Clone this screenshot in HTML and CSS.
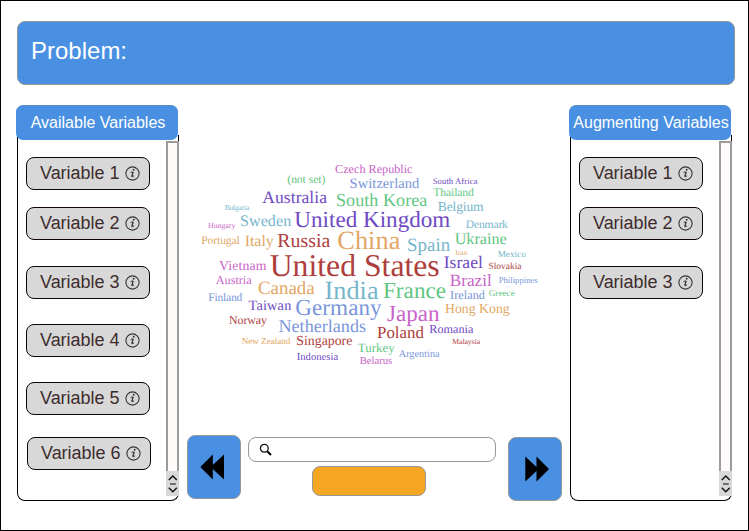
FILE: index.html
```html
<!DOCTYPE html>
<html lang="en">
<head>
<meta charset="utf-8">
<title>Variables</title>
<link rel="stylesheet" href="styles.css">
</head>
<body>
<svg class="defs" width="0" height="0" aria-hidden="true">
  <symbol id="info" viewBox="0 0 15 15">
    <circle cx="7.5" cy="7.5" r="6.6" fill="none" stroke="#3b3435" stroke-width="1.1"/>
    <circle cx="8.7" cy="3.7" r="0.95" fill="#3b3435"/>
    <path d="M5.6 6.6Q7.4 5.6 8.1 6L6.9 10.4Q6.7 11.6 9.1 9.8" fill="none" stroke="#3b3435" stroke-width="1"/>
    <path d="M8 6.2 6.9 10.6" stroke="#3b3435" stroke-width="1.2"/>
  </symbol>
  <symbol id="stepper" viewBox="0 0 13 25">
    <path d="M2.8 9 6.8 5 10.8 9M2.8 16.8 6.8 20.8 10.8 16.8" fill="none" stroke="#111" stroke-width="1.4"/>
    <path d="M4 13H9.8" stroke="#333" stroke-width="1.3"/>
  </symbol>
</svg>
<div class="frame">
  <header class="problem">Problem:</header>
  <main class="columns">
    <section class="panel">
      <h2 class="panel-title"><span class="available">Available Variables</span></h2>
      <div class="panel-body">
        <ul class="list">
          <li class="chip">Variable 1<svg><use href="#info"/></svg></li>
          <li class="chip">Variable 2<svg><use href="#info"/></svg></li>
          <li class="chip">Variable 3<svg><use href="#info"/></svg></li>
          <li class="chip">Variable 4<svg><use href="#info"/></svg></li>
          <li class="chip">Variable 5<svg><use href="#info"/></svg></li>
          <li class="chip">Variable 6<svg><use href="#info"/></svg></li>
        </ul>
        <div class="scroll"><div class="track"></div><svg class="stepper"><use href="#stepper"/></svg></div>
      </div>
    </section>
    <section class="center">
      <svg class="cloud" viewBox="187 105 375 330">
        <g class="magenta">
          <text x="335" y="172.5" font-size="12.2" textLength="77.5">Czech Republic</text>
          <text x="208" y="227.5" font-size="7.8" textLength="27.3">Hungary</text>
          <text x="219" y="270.3" font-size="13.8" textLength="47.5">Vietnam</text>
          <text x="215.7" y="284" font-size="12.2" textLength="36">Austria</text>
          <text x="449.7" y="286" font-size="17.2" textLength="42">Brazil</text>
          <text x="387" y="321" font-size="23.1" textLength="52.5">Japan</text>
          <text x="359.7" y="363.5" font-size="10.7" textLength="32.5">Belarus</text>
        </g>
        <g class="green">
          <text x="287.3" y="182.5" font-size="11.6" textLength="38">(not set)</text>
          <text x="433.3" y="196" font-size="11.6" textLength="40.5">Thailand</text>
          <text x="336" y="205.5" font-size="18.1" textLength="91.3">South Korea</text>
          <text x="454.7" y="244.3" font-size="16.1" textLength="52">Ukraine</text>
          <text x="383" y="298" font-size="23.1" textLength="63">France</text>
          <text x="488.7" y="296" font-size="9.1" textLength="26">Greece</text>
          <text x="357.7" y="352" font-size="12.8" textLength="37">Turkey</text>
        </g>
        <g class="blue">
          <text x="349.6" y="188.3" font-size="14.5" textLength="69.7">Switzerland</text>
          <text x="498.7" y="283" font-size="8.7" textLength="39">Philippines</text>
          <text x="208.3" y="301" font-size="11.5" textLength="34">Finland</text>
          <text x="295.3" y="315" font-size="23.1" textLength="86.3">Germany</text>
          <text x="450" y="299" font-size="12.3" textLength="35">Ireland</text>
          <text x="278.5" y="331.8" font-size="18.1" textLength="87.5">Netherlands</text>
          <text x="398.7" y="357" font-size="10.3" textLength="41">Argentina</text>
        </g>
        <g class="purple">
          <text x="432.7" y="184.3" font-size="8.7" textLength="44.8">South Africa</text>
          <text x="262.3" y="203.3" font-size="17.6" textLength="64.7">Australia</text>
          <text x="294.3" y="227" font-size="23.1" textLength="156">United Kingdom</text>
          <text x="443.7" y="268" font-size="17.6" textLength="39.2">Israel</text>
          <text x="248.5" y="309.5" font-size="14.3" textLength="42.8">Taiwan</text>
          <text x="429.3" y="333" font-size="12.2" textLength="44">Romania</text>
          <text x="296.7" y="359.5" font-size="10.6" textLength="41.5">Indonesia</text>
        </g>
        <g class="teal">
          <text x="437.7" y="210.7" font-size="13.6" textLength="46">Belgium</text>
          <text x="224.7" y="209.8" font-size="7.5" textLength="24.6">Bulgaria</text>
          <text x="240" y="226" font-size="16.1" textLength="51.2">Sweden</text>
          <text x="465.7" y="227.7" font-size="11.6" textLength="42.2">Denmark</text>
          <text x="407" y="251.3" font-size="18.9" textLength="43.3">Spain</text>
          <text x="497.7" y="256.5" font-size="9.1" textLength="28">Mexico</text>
          <text x="324.5" y="299" font-size="26.2" textLength="54">India</text>
        </g>
        <g class="orange">
          <text x="201.2" y="244.3" font-size="11.6" textLength="38.6">Portugal</text>
          <text x="244.7" y="245.7" font-size="15.8" textLength="29">Italy</text>
          <text x="337.3" y="249" font-size="26.3" textLength="63">China</text>
          <text x="455.3" y="254.7" font-size="7.3" textLength="12">Iran</text>
          <text x="258" y="294" font-size="18.9" textLength="56.7">Canada</text>
          <text x="445" y="313" font-size="13.8" textLength="64.7">Hong Kong</text>
          <text x="241.7" y="343.5" font-size="9.1" textLength="48.6">New Zealand</text>
        </g>
        <g class="red">
          <text x="277.3" y="247" font-size="19.8" textLength="53">Russia</text>
          <text x="269.7" y="276" font-size="31.7" textLength="170">United States</text>
          <text x="488.5" y="269" font-size="9.4" textLength="33">Slovakia</text>
          <text x="229" y="323.5" font-size="11.9" textLength="38">Norway</text>
          <text x="377" y="338" font-size="16.9" textLength="47">Poland</text>
          <text x="296.3" y="345" font-size="13.8" textLength="56">Singapore</text>
          <text x="452.3" y="344" font-size="7.6" textLength="27.7">Malaysia</text>
        </g>
      </svg>
      <div class="controls">
        <button class="nav" aria-label="Previous"><svg viewBox="0 0 54 64"><path d="M13.3 32 25.8 19.5V30L37 19.5V44.5L25.8 34V44.5Z"/></svg></button>
        <div class="fields">
          <label class="search"><svg viewBox="0 0 14 14"><circle cx="5.3" cy="5.3" r="3.9" fill="none" stroke="#111" stroke-width="1.3"/><path d="M8.2 8.2 12 12" stroke="#000" stroke-width="2.1"/></svg><input aria-label="Search"></label>
          <button class="submit" aria-label="Submit"></button>
        </div>
        <button class="nav next" aria-label="Next"><svg viewBox="0 0 54 64"><path d="M41 32 28.5 19.5V30L17.3 19.5V44.5L28.5 34V44.5Z"/></svg></button>
      </div>
    </section>
    <section class="panel">
      <h2 class="panel-title"><span class="augmenting">Augmenting Variables</span></h2>
      <div class="panel-body">
        <ul class="list">
          <li class="chip">Variable 1<svg><use href="#info"/></svg></li>
          <li class="chip">Variable 2<svg><use href="#info"/></svg></li>
          <li class="chip">Variable 3<svg><use href="#info"/></svg></li>
        </ul>
        <div class="scroll"><div class="track"></div><svg class="stepper"><use href="#stepper"/></svg></div>
      </div>
    </section>
  </main>
</div>
</body>
</html>
```
FILE: styles.css
```css
* { box-sizing: border-box; }
body { margin: 0; background: #fff; font-family: "Liberation Sans", Arial, sans-serif; }
.defs { display: block; }
.frame { width: 749px; height: 531px; border: 1px solid #000; padding: 20px 13px 0 15px; overflow: hidden; }
.problem {
  height: 64px; margin-left: 1px; padding-left: 13px;
  border: 1px solid #979797; border-radius: 8px; background: #4990e2;
  color: #fff; font-size: 24px; line-height: 58px;
}
.columns { display: grid; grid-template-columns: 163px 375px 163px; justify-content: start; column-gap: 8px; margin-top: 20px; }
.columns > :last-child { margin-left: -1px; margin-right: 1px; }
.panel { width: 163px; height: 396px; display: flex; flex-direction: column; }
.panel-title {
  position: relative; z-index: 1;
  width: 162px; height: 35px; margin: 0; border-radius: 7px; background: #4990e2; border-top: 1px solid #5c8fca;
  color: #fff; font-size: 16px; font-weight: 400; line-height: 34px; text-align: center; white-space: nowrap;
}
.available { padding-left: 2px; }
.augmenting { padding-left: 2px; }
.panel-body {
  flex: 1; display: flex; justify-content: space-between; margin-top: -5px; margin-left: 1px;
  padding-top: 6px; border: 1px solid #000; border-top: 0; border-radius: 0 0 8px 8px;
}
.list { list-style: none; margin: 0; padding: 16px 0 0 8px; }
.chip {
  width: 124px; height: 33px; padding-left: 13px; margin-bottom: 17px;
  display: flex; align-items: center; gap: 6px;
  border: 1px solid #100406; border-radius: 8px; background: #d8d8d8;
  color: #3d2c2d; font-size: 18px; letter-spacing: -0.03px; white-space: nowrap;
}
.chip:nth-child(2) { margin-bottom: 26px; }
.chip:nth-child(3), .chip:nth-child(4) { margin-bottom: 25px; }
.chip:nth-child(5) { margin-bottom: 22px; }
.chip:nth-child(6) { margin-left: 1px; }
.chip svg { width: 15px; height: 15px; flex: none; }
.scroll { width: 13px; height: 355px; margin-right: -1px; display: flex; flex-direction: column; }
.track { flex: 1; border: 2px solid #9b9b9b; border-bottom: 0; background: #fffafa; }
.stepper { width: 13px; height: 25px; background: #d8d8d8; }
.center { display: flex; flex-direction: column; }
.cloud { width: 375px; height: 330px; display: block; font-family: "Liberation Serif", "Times New Roman", serif; text-rendering: geometricPrecision; }
.magenta { fill: #c863c8; }
.green { fill: #5fc681; }
.blue { fill: #7996dc; }
.purple { fill: #6e49c4; }
.teal { fill: #76b5cb; }
.orange { fill: #e2a765; }
.red { fill: #ae3e3c; }
.controls { display: flex; justify-content: space-between; }
.nav { width: 54px; height: 64px; padding: 0; border: 1px solid #979797; border-radius: 8px; background: #4990e2; }
.nav svg { display: block; width: 54px; height: 64px; margin: -1px; }
.next { margin-top: 2px; }
.fields { width: 248px; padding-top: 2px; margin-right: 5px; }
.search { display: flex; align-items: center; width: 248px; height: 25px; padding-left: 10px; border: 1px solid #979797; border-radius: 8px; background: #fff; }
.search svg { width: 14px; height: 14px; flex: none; }
.search input { flex: 1; min-width: 0; border: 0; outline: 0; background: none; }
.submit { display: block; width: 114px; height: 30px; margin: 4px 0 0 64px; border: 1px solid #979797; border-radius: 8px; background: #f5a623; }
```
